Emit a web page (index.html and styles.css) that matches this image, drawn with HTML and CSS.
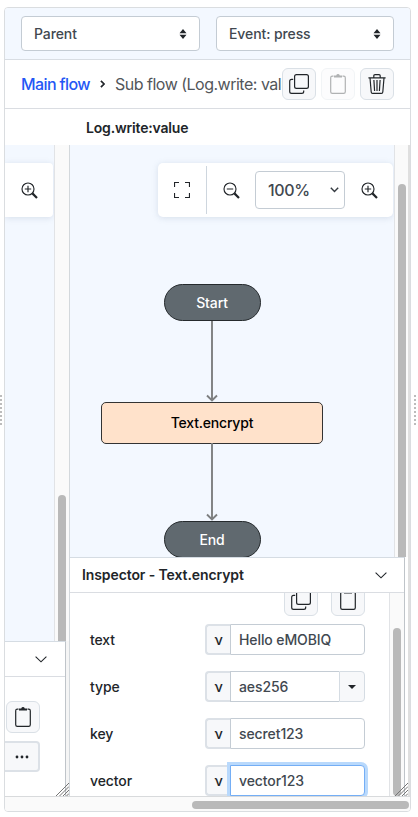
FILE: index.html
```html
<!DOCTYPE html>
<html lang="en">
<head>
<meta charset="utf-8">
<title>Flow editor</title>
<link rel="stylesheet" href="styles.css">
</head>
<body>
<svg class="defs" width="0" height="0">
  <symbol id="copy" viewBox="0 0 20 20"><path d="M7.500.7h10a1.900 1.900 0 0 1 1.900 1.900v9.800a1.900 1.900 0 0 1-1.900 1.900h-10a1.900 1.900 0 0 1-1.900-1.900V2.600A1.900 1.900 0 0 1 7.500.7zM4.200 5.300H2.600A1.900 1.900 0 0 0 .7 7.200v10.200a1.900 1.900 0 0 0 1.900 1.900h10.200a1.900 1.900 0 0 0 1.900-1.900v-1"/></symbol>
  <symbol id="clip" viewBox="0 0 16 20"><path d="M3.500 2.100H2.300A1.600 1.600 0 0 0 .7 3.700v14a1.600 1.600 0 0 0 1.600 1.600h11.400a1.600 1.600 0 0 0 1.600-1.600v-14a1.600 1.600 0 0 0-1.600-1.600h-1.200"/><path class="solid" d="M4 1.400h2.200Q6.700 0 8 0t1.800 1.400H12V3.600H4z"/></symbol>
  <symbol id="trash" viewBox="0 0 18 20"><path d="M.4 3.800h17.200M5.800 3.500V1.800Q5.800.6 7 .6h4q1.200 0 1.200 1.200v1.700M2 4l1.200 14q.1 1.400 1.400 1.400h8.800q1.300 0 1.400-1.400L16 4M5.900 6l.7 11M9 6v11M12.100 6l-.7 11"/></symbol>
  <symbol id="zin" viewBox="0 0 17 17"><circle cx="7" cy="7" r="6"/><path d="M3.800 7h6.400M7 3.800v6.400"/><path class="handle" d="m11.400 11.400 4.600 4.600"/></symbol>
  <symbol id="zout" viewBox="0 0 17 17"><circle cx="7" cy="7" r="6"/><path d="M3.800 7h6.400"/><path class="handle" d="m11.400 11.400 4.600 4.600"/></symbol>
  <symbol id="chev" viewBox="0 0 12 7"><path d="m.6.600 5.400 5.200L11.400.6"/></symbol>
  <symbol id="updown" viewBox="0 0 8 10"><path class="solid" d="M.5 4.200 4 0l3.500 4.200zM.5 5.800 4 10l3.500-4.200z"/></symbol>
  <symbol id="grip" viewBox="0 0 13 13"><path d="M0 13 13 0M3.500 13 13 3.500M7 13l6-6M10.500 13l2.500-2.500"/></symbol>
</svg>
<div class="splitter left-split"></div>
<div class="splitter right-split"></div>
<main class="frame">
  <header class="selects">
    <div class="select">Parent<svg class="ud"><use href="#updown"/></svg></div>
    <div class="select">Event: press<svg class="ud"><use href="#updown"/></svg></div>
  </header>
  <nav class="crumbs">
    <div class="trail"><a>Main flow</a><svg class="sep" viewBox="0 0 5 8"><path d="m.9.8 3.200 3.200L.9 7.200"/></svg><span>Sub flow (Log.write: value)</span></div>
    <div class="tools">
      <button class="btn"><svg class="ic20"><use href="#copy"/></svg></button>
      <button class="btn off"><svg class="clip"><use href="#clip"/></svg></button>
      <button class="btn"><svg class="trash"><use href="#trash"/></svg></button>
    </div>
  </nav>
  <h1 class="title">Log.write:value</h1>
  <div class="panes">
    <section class="pane first">
      <div class="view">
        <div class="canvas"><div class="zoombar partial"><svg class="zoom"><use href="#zin"/></svg></div></div>
        <div class="track"><i class="thumb low"></i></div>
      </div>
      <div class="inspector">
        <div class="head end"><svg class="chev"><use href="#chev"/></svg></div>
        <div class="side">
          <button class="btn"><svg class="clip"><use href="#clip"/></svg></button>
          <div class="more"><svg viewBox="0 0 14 4"><circle cx="2" cy="2" r="1.400"/><circle cx="7" cy="2" r="1.400"/><circle cx="12" cy="2" r="1.400"/></svg></div>
        </div>
      </div>
      <svg class="grip"><use href="#grip"/></svg>
    </section>
    <section class="pane second">
      <div class="view">
        <div class="canvas">
          <div class="zoombar full">
            <div class="fit"><svg viewBox="0 0 16 16"><path d="M.5 5V.5H5M11 .5h4.500V5M15.500 11v4.500H11M5 15.500H.5V11"/></svg></div>
            <svg class="zoom"><use href="#zout"/></svg>
            <div class="percent">100%<svg viewBox="0 0 9 6"><path d="m.8.8 3.700 3.700L8.200.8"/></svg></div>
            <svg class="zoom"><use href="#zin"/></svg>
          </div>
          <div class="flow">
            <div class="pill">Start</div>
            <svg class="arrow" viewBox="0 0 16 81"><path d="M8 0v80M3 74.500l5 5 5-5"/></svg>
            <div class="node">Text.encrypt</div>
            <svg class="arrow second-arrow" viewBox="0 0 16 78"><path d="M8 0v77M3 71.500l5 5 5-5"/></svg>
            <div class="pill">End</div>
          </div>
        </div>
        <div class="track"><i class="thumb high"></i></div>
      </div>
      <div class="inspector">
        <div class="head"><b>Inspector - Text.encrypt</b><svg class="chev"><use href="#chev"/></svg></div>
        <div class="content">
          <div class="form">
            <div class="actions">
              <button class="btn"><svg class="ic20"><use href="#copy"/></svg></button>
              <button class="btn"><svg class="clip"><use href="#clip"/></svg></button>
            </div>
            <div class="row"><label>text</label><div class="field"><span class="var">ν</span><span class="input">Hello eMOBIQ</span></div></div>
            <div class="row"><label>type</label><div class="field"><span class="var">ν</span><span class="input combo">aes256</span><span class="drop"><i></i></span></div></div>
            <div class="row"><label>key</label><div class="field"><span class="var">ν</span><span class="input">secret123</span></div></div>
            <div class="row"><label>vector</label><div class="field"><span class="var">ν</span><span class="input focus">vector123</span></div></div>
          </div>
          <div class="track"><i class="thumb form-thumb"></i></div>
        </div>
      </div>
      <svg class="grip"><use href="#grip"/></svg>
    </section>
  </div>
  <footer class="hscroll"><i></i></footer>
</main>
</body>
</html>
```
FILE: styles.css
```css
* { box-sizing: border-box; }
html, body { height: 100%; }
body { margin: 0; overflow: hidden; background: #fff; padding: 7px 7px 5px 4px; font: 500 14px/20px Inter, "Noto Sans", sans-serif; letter-spacing: -.1px; color: #212529; position: relative; }
svg { display: block; fill: none; stroke: #212529; stroke-width: 1.2; flex: none; }
.defs { position: absolute; }
.solid { fill: #212529; stroke: none; }
.frame { height: 805px; width: 407px; border: 1px solid #dadde0; border-radius: 4px; overflow: hidden; display: flex; flex-direction: column; }
.splitter { position: absolute; top: 395px; width: 6px; height: 30px; background: repeating-linear-gradient(90deg, transparent 0 2px, #fff 2px 4px), repeating-linear-gradient(#bcbcbc 0 2px, #fff 2px 4px); }
.left-split { left: 0; width: 2px; }
.right-split { left: 414px; width: 4px; }
.selects { height: 52px; flex: none; background: #f3f8ff; border-bottom: 1px solid #d8dde3; padding: 8px 16px; display: flex; gap: 16px; }
.select { width: 179px; height: 35px; border: 1px solid #c4ccd4; border-radius: 4px; background: #fff; padding: 0 12px; display: flex; justify-content: space-between; align-items: center; color: #414850; }
.select:last-child { width: 178px; }
.ud { width: 8px; height: 10px; }
.crumbs { height: 49px; flex: none; border-bottom: 1px solid #dadde2; padding: 0 16px; display: flex; align-items: center; }
.trail { width: 261px; overflow: hidden; white-space: nowrap; display: flex; align-items: center; font-size: 16px; line-height: 24px; font-weight: 400; color: #52565a; flex: none; }
.trail a { color: #2457f5; font-weight: 500; letter-spacing: -.6px; width: 78px; flex: none; }
.trail span { letter-spacing: -.5px; flex: none; }
.sep { width: 5px; height: 8px; margin-left: 1px; margin-right: 10px; stroke-width: 1.7; }
.tools { display: flex; gap: 5px; }
.btn { width: 34px; height: 32px; border: 1px solid #dae0e6; border-radius: 6px; background: #f7f8fa; padding: 0; display: flex; align-items: center; justify-content: center; flex: none; }
.off { opacity: .35; }
.ic20 { width: 20px; height: 20px; }
.clip { width: 16px; height: 20px; }
.trash { width: 18px; height: 20px; }
.title { margin: 0; height: 36px; flex: none; padding: 9px 0 0 81px; font-size: 14px; line-height: 20px; font-weight: 600; letter-spacing: -.18px; }
.panes { flex: 1; min-height: 0; display: flex; }
.pane { position: relative; display: flex; flex-direction: column; overflow: hidden; }
.first { width: 64px; background: #f5f5f5; }
.second { width: 341px; border-left: 1px solid #d3d8dc; border-right: 2px solid #dfdfdf; }
.view { display: flex; overflow: hidden; flex: none; }
.first .view { height: 496px; background: #fafafa; }
.second .view { height: 412px; }
.canvas { background: #f3f8ff; overflow: hidden; padding-top: 18px; flex: none; }
.first .canvas { width: 49px; }
.second .canvas { width: 324px; }
.track { width: 15px; background: #fafafa; border-left: 1px solid #e1e3e6; padding-left: 3px; flex: none; }
.thumb { display: block; width: 8px; border-radius: 4px; background: #b9b9b9; }
.low { margin-top: 350px; height: 180px; }
.high { margin-top: 39px; height: 400px; }
.form-thumb { margin-top: 35px; height: 168px; }
.zoombar { height: 54px; background: #fff; box-shadow: 0 1px 6px #7890a83d; display: flex; align-items: center; }
.partial { border-radius: 0 4px 4px 0; padding-left: 15.500px; width: 48px; }
.full { width: 235px; margin-left: 88px; border-radius: 5px; }
.zoom { width: 17px; height: 17px; stroke-width: 1.15; }
.handle { stroke-width: 2.2; }
.fit { width: 49px; height: 48px; border-right: 1px solid #ced6de; display: flex; align-items: center; justify-content: center; margin-right: 15.500px; }
.fit svg { width: 16px; height: 16px; }
.percent { width: 90px; height: 38px; border: 1px solid #c4ccd4; border-radius: 4px; margin: 0 15.500px; padding: 0 5px 0 12px; display: flex; justify-content: space-between; align-items: center; font-size: 16px; letter-spacing: -.35px; color: #414850; }
.percent svg { width: 9px; height: 6px; stroke: #343a40; stroke-width: 1.4; }
.flow { display: flex; flex-direction: column; align-items: center; padding-top: 67px; width: 284px; }
.pill { width: 97px; height: 37px; border: 1px solid #252a2d; border-radius: 19px; background: #60696f; color: #fff; display: flex; align-items: center; justify-content: center; flex: none; }
.node { width: 222px; height: 42px; margin-bottom: -1px; border: 1.500px solid #333; border-radius: 5px; background: #ffe2cb; color: #000; letter-spacing: -.2px; display: flex; align-items: center; justify-content: center; flex: none; }
.arrow { width: 16px; height: 81px; stroke: #7d7f80; stroke-width: 1.9; }
.second-arrow { height: 78px; }
.inspector { flex: 1; min-height: 0; background: #fff; border-top: 1px solid #d5dce3; border-right: 1px solid #bfc4c9; display: flex; flex-direction: column; }
.first .inspector { width: 61px; }
.second .inspector { width: 335px; }
.head { height: 35px; flex: none; border-bottom: 1px solid #dadde2; padding: 0 17px 0 12px; display: flex; align-items: center; justify-content: space-between; }
.head b { font-weight: 600; letter-spacing: -.1px; }
.head.end { justify-content: flex-end; padding-right: 18px; }
.chev { width: 12px; height: 7px; stroke-width: 1.1; }
.side { padding: 24px 0 0 1px; }
.more { width: 35px; height: 31px; margin: 8px 0 0 -1px; border: 2px solid #dce1e7; border-left: 0; border-radius: 0 4px 4px 0; background: #f7f8fa; display: flex; align-items: center; justify-content: center; }
.more svg { width: 14px; height: 4px; fill: #212529; stroke: none; }
.grip { position: absolute; right: 0; bottom: 0; width: 13px; height: 13px; stroke: #757575; stroke-width: 1; }
.content { flex: 1; min-height: 0; display: flex; overflow: hidden; }
.form { width: 319px; padding: 0 24px 0 20px; overflow: hidden; flex: none; }
.actions { display: flex; justify-content: flex-end; gap: 13px; margin-top: -9px; margin-bottom: 8px; }
.row { height: 31px; margin-bottom: 16px; display: flex; align-items: center; justify-content: space-between; }
.field { width: 160px; height: 31px; display: flex; }
.var { width: 25px; border: 2px solid #dce1e7; border-right: 0; border-radius: 4px 0 0 4px; background: #f7f8fa; display: flex; align-items: center; justify-content: center; flex: none; }
.input { flex: 1; border: 1px solid #c4ccd4; border-radius: 0 4px 4px 0; background: #fff; color: #414850; padding-left: 8px; display: flex; align-items: center; }
.combo { border-right: 0; border-radius: 0; }
.drop { width: 26px; border: 1px solid #d5dce3; border-radius: 0 4px 4px 0; background: #f7f8fa; display: flex; align-items: center; justify-content: center; }
.drop i { border: 4px solid transparent; border-top-color: #212529; border-bottom: 0; }
.focus { border-color: #74aef5; box-shadow: 0 0 0 3px #b9d9fc; }
.hscroll { height: 15px; flex: none; background: #fafafa; border-top: 1px solid #d8dadc; padding: 4px 1px 0 187px; }
.hscroll i { display: block; height: 8px; border-radius: 4px; background: #b9b9b9; }
```
